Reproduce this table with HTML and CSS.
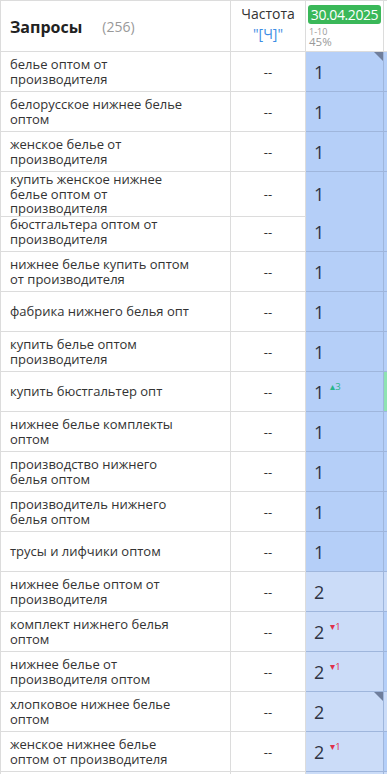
FILE: index.html
```html
<!DOCTYPE html>
<html lang="ru">
<head>
<meta charset="utf-8">
<link rel="stylesheet" href="styles.css">
</head>
<body>
<div class="grid">
  <div class="row head">
    <div class="cell h-q"><span class="h-title">Запросы</span><span class="h-count">(256)</span></div>
    <div class="cell h-f"><div class="h-freq">Частота</div><div class="h-link">"[Ч]"</div></div>
    <div class="cell h-d"><div class="badge">30.04.2025</div><div class="h-sub">1-10</div><div class="h-pct">45%</div></div>
    <div class="cell h-n"></div>
  </div>
  <div class="row"><div class="cell q">белье оптом от производителя</div><div class="cell f">--</div><div class="cell d r1 mark">1</div><div class="cell n r1"></div></div>
  <div class="row"><div class="cell q">белорусское нижнее белье оптом</div><div class="cell f">--</div><div class="cell d r1">1</div><div class="cell n r1"></div></div>
  <div class="row"><div class="cell q">женское белье от производителя</div><div class="cell f">--</div><div class="cell d r1">1</div><div class="cell n r1"></div></div>
  <div class="row"><div class="cell q">купить женское нижнее белье оптом от производителя</div><div class="cell f">--</div><div class="cell d r1">1</div><div class="cell n r1"></div></div>
  <div class="row"><div class="cell q">бюстгальтера оптом от производителя</div><div class="cell f">--</div><div class="cell d r1">1</div><div class="cell n r1"></div></div>
  <div class="row"><div class="cell q">нижнее белье купить оптом от производителя</div><div class="cell f">--</div><div class="cell d r1">1</div><div class="cell n r1"></div></div>
  <div class="row"><div class="cell q">фабрика нижнего белья опт</div><div class="cell f">--</div><div class="cell d r1">1</div><div class="cell n r1"></div></div>
  <div class="row"><div class="cell q">купить белье оптом производителя</div><div class="cell f">--</div><div class="cell d r1">1</div><div class="cell n r1"></div></div>
  <div class="row"><div class="cell q">купить бюстгальтер опт</div><div class="cell f">--</div><div class="cell d r1">1<sup class="up">&#9652;3</sup></div><div class="cell n up-bg"></div></div>
  <div class="row"><div class="cell q">нижнее белье комплекты оптом</div><div class="cell f">--</div><div class="cell d r1">1</div><div class="cell n r1"></div></div>
  <div class="row"><div class="cell q">производство нижнего белья оптом</div><div class="cell f">--</div><div class="cell d r1">1</div><div class="cell n r1"></div></div>
  <div class="row"><div class="cell q">производитель нижнего белья оптом</div><div class="cell f">--</div><div class="cell d r1">1</div><div class="cell n r1"></div></div>
  <div class="row"><div class="cell q">трусы и лифчики оптом</div><div class="cell f">--</div><div class="cell d r1">1</div><div class="cell n r1"></div></div>
  <div class="row"><div class="cell q">нижнее белье оптом от производителя</div><div class="cell f">--</div><div class="cell d r2">2</div><div class="cell n r2"></div></div>
  <div class="row"><div class="cell q">комплект нижнего белья оптом</div><div class="cell f">--</div><div class="cell d r2">2<sup class="down">&#9662;1</sup></div><div class="cell n r1"></div></div>
  <div class="row"><div class="cell q">нижнее белье от производителя оптом</div><div class="cell f">--</div><div class="cell d r2">2<sup class="down">&#9662;1</sup></div><div class="cell n r1"></div></div>
  <div class="row"><div class="cell q">хлопковое нижнее белье оптом</div><div class="cell f">--</div><div class="cell d r2 mark">2</div><div class="cell n r2"></div></div>
  <div class="row"><div class="cell q">женское нижнее белье оптом от производителя</div><div class="cell f">--</div><div class="cell d r2">2<sup class="down">&#9662;1</sup></div><div class="cell n r1"></div></div>
  <div class="row"><div class="cell q">нижнее белье оптом</div><div class="cell f">--</div><div class="cell d r2">2</div><div class="cell n r2"></div></div>
</div>
</body>
</html>
```
FILE: styles.css
```css
html, body {
  margin: 0;
  padding: 0;
  overflow: hidden;
  background: #fff;
}
body {
  font-family: "Open Sans", "Noto Sans", sans-serif;
  color: #333;
  width: 387px;
  height: 774px;
}
.grid {
  width: 460px;
}
.row {
  display: grid;
  grid-template-columns: 231px 75px 78px 76px;
  height: 40px;
}
.cell {
  box-sizing: border-box;
  border-right: 1px solid #dcdcdc;
  border-bottom: 1px solid #dcdcdc;
  display: flex;
  align-items: center;
  position: relative;
  min-width: 0;
}
.row .cell:first-child {
  border-left: 1px solid #dcdcdc;
}
.row.head {
  height: 52px;
}
.head .cell {
  border-top: 1px solid #dcdcdc;
}
.h-q {
  padding: 1px 0 0 9px;
}
.h-title {
  font-size: 16px;
  font-weight: 700;
  color: #222;
}
.h-count {
  font-size: 14px;
  color: #999;
  margin-left: 20px;
}
.h-f {
  flex-direction: column;
  align-items: center;
  justify-content: flex-start;
  padding-top: 3px;
}
.h-freq {
  font-size: 14px;
  line-height: 19px;
  color: #333;
}
.h-link {
  font-size: 14px;
  line-height: 19px;
  color: #3d8de4;
  margin-top: 1px;
}
.h-d {
  flex-direction: column;
  align-items: stretch;
  justify-content: flex-start;
  padding: 4px 2px 0 2px;
}
.badge {
  background: #3ab859;
  color: #fff;
  font-size: 14px;
  line-height: 19px;
  border-radius: 3px;
  text-align: center;
  letter-spacing: -0.4px;
}
.h-sub {
  font-size: 9px;
  line-height: 10px;
  color: #999;
  margin-top: 3px;
  padding-left: 1px;
}
.h-pct {
  font-size: 11.5px;
  line-height: 10px;
  color: #999;
  padding-left: 1px;
}
.q {
  font-size: 13px;
  line-height: 14.5px;
  padding: 0 37px 0 9px;
  color: #333;
}
.f {
  justify-content: center;
  font-size: 13px;
  color: #333;
}
.d {
  font-size: 18px;
  color: #2e3445;
  padding: 1px 0 0 8px;
}
.d, .n {
  border-color: #9fb6dc;
}
.r1 { background: #b5cff8; }
.r2 { background: #cbdcf8; }
.up-bg { background: #8ee3b3; }
.mark::after {
  content: "";
  position: absolute;
  top: 0;
  right: 0;
  border-style: solid;
  border-width: 0 9px 9px 0;
  border-color: transparent #6f7e9c transparent transparent;
}
sup {
  font-size: 9.5px;
  align-self: flex-start;
  margin-top: 9px;
  margin-left: 6px;
  line-height: 1;
}
.up { color: #2bb58a; }
.down { color: #e0304a; }
```
